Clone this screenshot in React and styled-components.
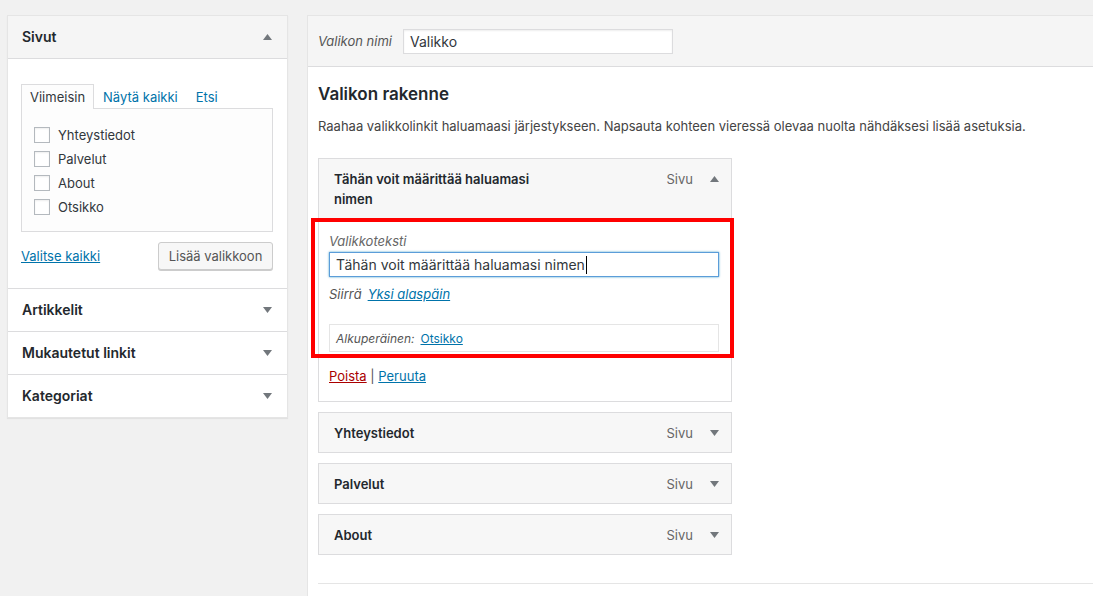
import React from 'react';
import styled, { createGlobalStyle } from 'styled-components';

const Global = createGlobalStyle`
  html, body { margin: 0; padding: 0; background: #f1f1f1; }
  body {
    font-family: Inter, "Liberation Sans", Arial, sans-serif;
    font-size: 13px;
    color: #444;
    overflow: hidden;
  }
  * { box-sizing: border-box; }
`;

const Page = styled.div`
  display: flex;
  align-items: flex-start;
  gap: 19px;
  padding: 15px 0 0 7px;
  height: 596px;
  overflow: hidden;
`;

/* ---------- left accordion ---------- */
const Accordion = styled.div`
  flex: 0 0 281px;
  width: 281px;
  background: #fff;
  border: 1px solid #e5e5e5;
  box-shadow: 0 1px 1px rgba(0, 0, 0, 0.06);
`;

const SectionHead = styled.div`
  display: flex;
  align-items: center;
  justify-content: space-between;
  height: 43px;
  padding: 0 15px 1px 14px;
  font-size: 14px;
  font-weight: 600;
  color: #23282d;
  background: ${p => (p.$open ? '#f5f5f5' : '#fff')};
  border-top: ${p => (p.$first ? 'none' : '1px solid #dcdcde')};
  border-bottom: ${p => (p.$open ? '1px solid #dcdcde' : 'none')};
`;

const SectionBody = styled.div`
  padding: 25px 14px 18px 13px;
`;

const Tabs = styled.div`
  display: flex;
  align-items: stretch;
  height: 24px;
`;

const Tab = styled.div`
  display: flex;
  align-items: center;
  padding: 0 8px;
  height: ${p => (p.$active ? 25 : 24)}px;
  color: ${p => (p.$active ? '#32373c' : '#0073aa')};
  background: ${p => (p.$active ? '#fdfdfd' : 'transparent')};
  border: 1px solid ${p => (p.$active ? '#dcdcde' : 'transparent')};
  border-bottom: none;
  position: relative;
  z-index: 1;
  font-size: 13px;
`;

const TabPanel = styled.div`
  height: 124px;
  border: 1px solid #dcdcde;
  background: #fdfdfd;
  padding: 14px 12px 12px;
`;

const CheckRow = styled.label`
  display: flex;
  align-items: center;
  gap: 8px;
  height: 24px;
  color: #32373c;
  font-size: 13px;
`;

const Checkbox = styled.span`
  display: inline-block;
  width: 16px;
  height: 16px;
  border: 1px solid #b4b9be;
  background: #fff;
  box-shadow: inset 0 1px 2px rgba(0, 0, 0, 0.07);
`;

const ActionRow = styled.div`
  display: flex;
  align-items: center;
  justify-content: space-between;
  margin-top: 10px;
`;

const Link = styled.a`
  color: ${p => (p.$danger ? '#a00' : '#0073aa')};
  text-decoration: underline;
  font-style: normal;
  cursor: pointer;
`;

const Button = styled.button`
  height: 28px;
  width: 115px;
  padding: 0 8px 1px;
  font-family: inherit;
  font-size: 13px;
  color: #555;
  background: #f7f7f7;
  border: 1px solid #ccc;
  border-radius: 3px;
  box-shadow: 0 1px 0 #ccc;
  white-space: nowrap;
`;

const Arrow = ({ up }) => (
  <svg width="9" height="6" viewBox="0 0 9 6" style={{ display: 'block' }}>
    <path d={up ? 'M0 6 L4.5 0 L9 6 Z' : 'M0 0 L9 0 L4.5 6 Z'} fill="#72777c" />
  </svg>
);

/* ---------- right panel ---------- */
const Editor = styled.div`
  flex: 0 0 820px;
  min-height: 620px;
  background: #fff;
  border: 1px solid #e5e5e5;
`;

const EditorHeader = styled.div`
  display: flex;
  align-items: center;
  gap: 11px;
  height: 51px;
  padding: 0 10px;
  background: #f5f5f5;
  border-bottom: 1px solid #dcdcde;
`;

const FieldLabel = styled.span`
  font-style: italic;
  color: #555;
  font-size: ${p => (p.$small ? 12 : 13)}px;
`;

const TextBox = styled.div`
  display: flex;
  align-items: center;
  height: 25px;
  width: ${p => p.$w || '100%'};
  padding: 0 6px;
  font-size: 14px;
  color: #32373c;
  background: #fff;
  border: 1px solid ${p => (p.$focus ? '#5b9dd9' : '#dcdcde')};
  box-shadow: ${p => (p.$focus ? '0 0 2px rgba(30,140,190,0.8)' : 'inset 0 1px 2px rgba(0,0,0,0.07)')};
`;

const Caret = styled.span`
  display: inline-block;
  width: 1px;
  height: 18px;
  background: #000;
  margin-left: 1px;
`;

const EditorBody = styled.div`
  padding: 0 10px;
`;

const Title = styled.h3`
  margin: 16px 0 0;
  font-size: 17px;
  line-height: 22px;
  font-weight: 600;
  color: #23282d;
`;

const Desc = styled.p`
  margin: 12px 0 0;
  line-height: 19px;
  font-size: 13px;
  color: #444;
`;

const MenuList = styled.div`
  margin-top: 22px;
  width: 414px;
  display: flex;
  flex-direction: column;
  gap: 10px;
`;

const Item = styled.div`
  position: relative;
`;

const ItemBar = styled.div`
  display: flex;
  align-items: flex-start;
  justify-content: space-between;
  padding: 10px 12px 9px 15px;
  line-height: 20px;
  background: #f7f7f7;
  border: 1px solid #dcdcde;
`;

const ItemTitle = styled.span`
  max-width: 222px;
  font-size: 13px;
  font-weight: 600;
  color: #23282d;
`;

const ItemControls = styled.span`
  display: flex;
  align-items: center;
  gap: 17px;
  height: 20px;
  font-size: 13px;
  color: #666;
`;

const Settings = styled.div`
  padding: 13px 12px 16px 10px;
  border: 1px solid #dcdcde;
  border-top: none;
  background: #fff;
`;

const SetLabel = styled.div`
  line-height: 18px;
  font-style: italic;
  color: #666;
  font-size: 13px;
`;

const MoveRow = styled.div`
  margin-top: 8px;
  line-height: 18px;
  font-style: italic;
  color: #555;
  display: flex;
  gap: 6px;
  & a { font-style: italic; }
`;

const Original = styled.div`
  margin-top: 21px;
  height: 28px;
  display: flex;
  align-items: center;
  gap: 6px;
  padding: 0 6px;
  border: 1px solid #e5e5e5;
  font-size: 12px;
`;

const ActionsLine = styled.div`
  margin-top: 15px;
  line-height: 18px;
  color: #555;
`;

const Highlight = styled.div`
  position: absolute;
  left: -7px;
  top: 60px;
  width: 423px;
  height: 140px;
  border: 4px solid #ff0000;
  pointer-events: none;
`;

const Footer = styled.div`
  margin-top: 28px;
  border-top: 1px solid #e5e5e5;
  height: 30px;
`;

const pages = ['Yhteystiedot', 'Palvelut', 'About', 'Otsikko'];

export default function App() {
  return (
    <>
      <Global />
      <Page>
        <Accordion>
          <SectionHead $open $first>
            Sivut
            <Arrow up />
          </SectionHead>
          <SectionBody>
            <Tabs>
              <Tab $active>Viimeisin</Tab>
              <Tab>Näytä kaikki</Tab>
              <Tab>Etsi</Tab>
            </Tabs>
            <TabPanel>
              {pages.map(p => (
                <CheckRow key={p}>
                  <Checkbox />
                  {p}
                </CheckRow>
              ))}
            </TabPanel>
            <ActionRow>
              <Link>Valitse kaikki</Link>
              <Button>Lisää valikkoon</Button>
            </ActionRow>
          </SectionBody>
          {['Artikkelit', 'Mukautetut linkit', 'Kategoriat'].map(s => (
            <SectionHead key={s}>
              {s}
              <Arrow />
            </SectionHead>
          ))}
        </Accordion>

        <Editor>
          <EditorHeader>
            <FieldLabel>Valikon nimi</FieldLabel>
            <TextBox $w="270px">Valikko</TextBox>
          </EditorHeader>
          <EditorBody>
            <Title>Valikon rakenne</Title>
            <Desc>
              Raahaa valikkolinkit haluamaasi järjestykseen. Napsauta kohteen vieressä olevaa nuolta nähdäksesi lisää asetuksia.
            </Desc>
            <MenuList>
              <Item>
                <ItemBar>
                  <ItemTitle>Tähän voit määrittää haluamasi nimen</ItemTitle>
                  <ItemControls>
                    Sivu
                    <Arrow up />
                  </ItemControls>
                </ItemBar>
                <Settings>
                  <SetLabel>Valikkoteksti</SetLabel>
                  <TextBox $focus style={{ marginTop: 2 }}>
                    Tähän voit määrittää haluamasi nimen
                    <Caret />
                  </TextBox>
                  <MoveRow>
                    Siirrä <Link>Yksi alaspäin</Link>
                  </MoveRow>
                  <Original>
                    <FieldLabel $small>Alkuperäinen:</FieldLabel>
                    <Link>Otsikko</Link>
                  </Original>
                  <ActionsLine>
                    <Link $danger>Poista</Link> | <Link>Peruuta</Link>
                  </ActionsLine>
                </Settings>
                <Highlight />
              </Item>
              {['Yhteystiedot', 'Palvelut', 'About'].map(t => (
                <Item key={t}>
                  <ItemBar>
                    <ItemTitle>{t}</ItemTitle>
                    <ItemControls>
                      Sivu
                      <Arrow />
                    </ItemControls>
                  </ItemBar>
                </Item>
              ))}
            </MenuList>
            <Footer />
          </EditorBody>
        </Editor>
      </Page>
    </>
  );
}
